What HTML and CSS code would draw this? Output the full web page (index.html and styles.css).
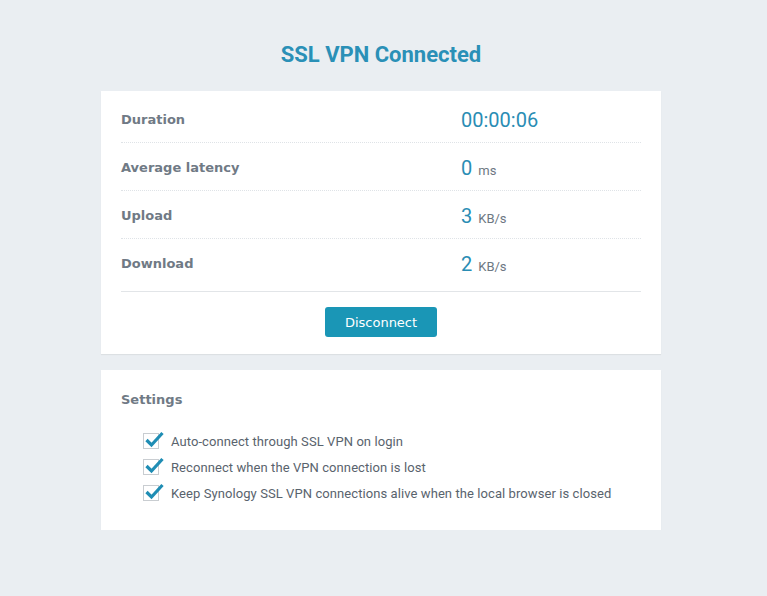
FILE: index.html
```html
<!DOCTYPE html>
<html>
<head>
<meta charset="utf-8">
<link rel="stylesheet" href="styles.css">
</head>
<body>
<div class="page">
  <h1 class="title">SSL VPN Connected</h1>
  <section class="card stats">
    <div class="row"><div class="label">Duration</div><div class="value"><span class="num">00:00:06</span></div></div>
    <div class="row"><div class="label">Average latency</div><div class="value"><span class="num">0</span><span class="unit">ms</span></div></div>
    <div class="row"><div class="label">Upload</div><div class="value"><span class="num">3</span><span class="unit">KB/s</span></div></div>
    <div class="row last"><div class="label">Download</div><div class="value"><span class="num">2</span><span class="unit">KB/s</span></div></div>
    <div class="footer"><button class="btn">Disconnect</button></div>
  </section>
  <section class="card settings">
    <div class="label head">Settings</div>
    <ul class="checks">
      <li class="check"><span class="box"><svg width="20" height="18" viewBox="0 0 20 18"><path d="M2.5 9 L7.5 14 L18.5 2" fill="none" stroke="#1f8db4" stroke-width="3.2"/></svg></span>Auto-connect through SSL VPN on login</li>
      <li class="check"><span class="box"><svg width="20" height="18" viewBox="0 0 20 18"><path d="M2.5 9 L7.5 14 L18.5 2" fill="none" stroke="#1f8db4" stroke-width="3.2"/></svg></span>Reconnect when the VPN connection is lost</li>
      <li class="check"><span class="box"><svg width="20" height="18" viewBox="0 0 20 18"><path d="M2.5 9 L7.5 14 L18.5 2" fill="none" stroke="#1f8db4" stroke-width="3.2"/></svg></span>Keep Synology SSL VPN connections alive when the local browser is closed</li>
    </ul>
  </section>
</div>
</body>
</html>
```
FILE: styles.css
```css
html, body {
  margin: 0;
  padding: 0;
  background: #eaeef2;
}
body {
  font-family: Roboto, "Liberation Sans", sans-serif;
}
.page {
  width: 560px;
  margin: 0 0 0 101px;
  padding-top: 41px;
}
.title {
  margin: 0 0 23px 0;
  height: 27px;
  line-height: 27px;
  text-align: center;
  font-family: Roboto, sans-serif;
  font-weight: 700;
  font-size: 22px;
  color: #2a90b7;
  letter-spacing: 0;
}
.card {
  background: #ffffff;
  box-shadow: 0 1px 1px rgba(0,0,0,0.06);
  box-sizing: border-box;
}
.stats {
  padding: 4px 20px 17px 20px;
  margin-bottom: 16px;
}
.row {
  display: flex;
  align-items: center;
  height: 47px;
  border-bottom: 1px dotted #dfe3e7;
}
.row.last {
  border-bottom: none;
}
.label {
  font-family: "DejaVu Sans", Verdana, sans-serif;
  font-weight: 700;
  font-size: 13px;
  color: #707a85;
  width: 340px;
  padding-top: 2px;
}
.value {
  display: flex;
  align-items: baseline;
  padding-top: 3px;
}
.num {
  font-family: Roboto, sans-serif;
  font-size: 20px;
  color: #2a8db4;
}
.unit {
  font-family: Roboto, sans-serif;
  font-size: 13px;
  color: #6d7782;
  margin-left: 6px;
}
.footer {
  margin-top: 5px;
  border-top: 1px solid #e2e5e8;
  padding-top: 15px;
  display: flex;
  justify-content: center;
}
.btn {
  width: 112px;
  height: 30px;
  border: none;
  border-radius: 3px;
  background: #1a96b6;
  color: #ffffff;
  font-family: "DejaVu Sans", Verdana, sans-serif;
  font-size: 13px;
  padding: 0;
  margin-left: 0;
}
.settings {
  padding: 20px 20px 24px 20px;
}
.head {
  height: 18px;
  line-height: 18px;
  padding-top: 1px;
}
.checks {
  list-style: none;
  margin: 19px 0 0 22px;
  padding: 0;
}
.check {
  display: flex;
  align-items: center;
  height: 26px;
  font-family: Roboto, sans-serif;
  font-size: 13px;
  letter-spacing: 0.08px;
  color: #59636d;
}
.box {
  position: relative;
  width: 16px;
  height: 16px;
  box-sizing: border-box;
  border: 1px solid #c9cdd1;
  margin-right: 12px;
  flex: none;
}
.box svg {
  position: absolute;
  left: 0;
  top: -3px;
  overflow: visible;
}
```
